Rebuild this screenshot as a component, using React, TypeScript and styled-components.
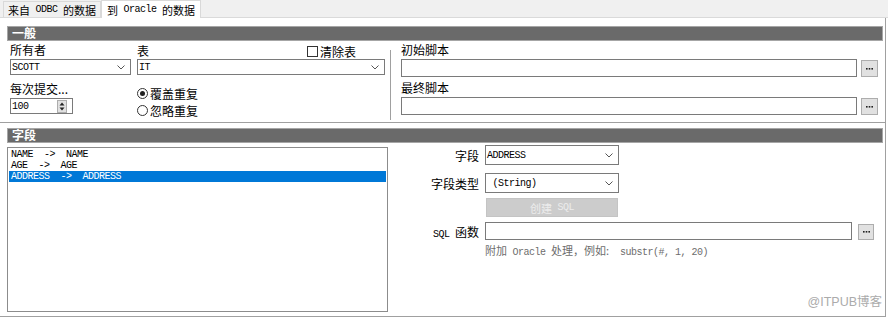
import React from "react";
import styled, {createGlobalStyle, css} from "styled-components";

const GlobalStyle = createGlobalStyle`
  html, body { margin: 0; padding: 0; background: #fff; }
  body {
    font-family: "Noto Sans CJK SC", "Noto Sans", sans-serif;
    font-size: 12px;
    color: #000;
  }
  * { box-sizing: border-box; }
`;

const mono = css`
  font-family: "Liberation Mono", "Noto Sans CJK SC", monospace;
  font-size: 10px;
  letter-spacing: -0.5px;
  white-space: pre;
`;

const Lat = styled.span`
  ${mono};
`;

const Window = styled.div`
  position: relative;
  width: 888px;
  height: 317px;
  overflow: hidden;
  background: #fff;
  display: flex;
  flex-direction: column;
`;

const TabStrip = styled.div`
  height: 18px;
  background: #f0f0f0;
  border-bottom: 1px solid #dadada;
  display: flex;
  align-items: flex-end;
  padding-left: 3px;
`;

const Tab = styled.div<{$active?: boolean}>`
  height: ${p => (p.$active ? 18 : 16)}px;
  margin-bottom: ${p => (p.$active ? -1 : 0)}px;
  padding: 0 ${p => (p.$active ? 5 : 4)}px;
  display: flex;
  align-items: center;
  font-size: 11px;
  white-space: pre;
  background: ${p => (p.$active ? "#fff" : "#f0f0f0")};
  border: 1px solid #d9d9d9;
  border-bottom: none;
`;

const Panel = styled.div`
  flex: 1;
  width: 886px;
  display: flex;
  flex-direction: column;
  padding-top: 8px;
  border-right: 1px solid #a0a0a0;
  border-bottom: 1px solid #a0a0a0;
`;

const SectionHeader = styled.div<{$mt?: number}>`
  margin: ${p => p.$mt ?? 0}px 0 0 7px;
  width: 876px;
  height: 15px;
  background: #6a6a6a;
  border: 1px solid #a6a6a6;
  color: #fff;
  font-size: 12px;
  font-weight: 700;
  line-height: 12px;
  padding-left: 4px;
`;

const GeneralBody = styled.div`
  height: 80px;
  display: flex;
  padding-left: 10px;
`;

const LeftGrid = styled.div`
  display: grid;
  grid-template-columns: 121px 248px;
  grid-template-rows: 18px 16px auto;
  column-gap: 6px;
`;

const Label = styled.div<{$h?: number}>`
  height: ${p => p.$h ?? 18}px;
  line-height: ${p => p.$h ?? 18}px;
  font-size: 12px;
  white-space: nowrap;
`;

const LabelRow = styled.div`
  display: flex;
  align-items: center;
  justify-content: space-between;
  height: 18px;
  padding-right: 29px;
`;

const CheckLabel = styled.label`
  display: flex;
  align-items: center;
  gap: 2px;
  font-size: 12px;
  margin-top: 2px;
`;

const CheckBox = styled.span`
  width: 11px;
  height: 11px;
  border: 1px solid #333;
  background: #fff;
`;

const Combo = styled.div<{$w?: number; $h?: number}>`
  width: ${p => (p.$w ? `${p.$w}px` : "auto")};
  height: ${p => p.$h ?? 16}px;
  border: 1px solid #7a7a7a;
  background: #fff;
  display: flex;
  align-items: center;
  justify-content: space-between;
  padding: 0 5px 0 1px;
  ${mono};
`;

const Chevron = () => (
  <svg width="8" height="5" viewBox="0 0 8 5">
    <polyline points="0.5,0.5 4,4 7.5,0.5" fill="none" stroke="#555" strokeWidth="1" />
  </svg>
);

const Stack = styled.div<{$mt?: number}>`
  display: flex;
  flex-direction: column;
  margin-top: ${p => p.$mt ?? 0}px;
`;

const Spin = styled.div`
  width: 63px;
  height: 16px;
  margin-top: 1px;
  border: 1px solid #7a7a7a;
  background: #fff;
  display: flex;
  align-items: center;
  justify-content: space-between;
  padding: 0 5px 0 1px;
  ${mono};
`;

const SpinButton = styled.span`
  width: 10px;
  height: 13px;
  background: #e1e1e1;
  border: 1px solid #adadad;
  display: flex;
  align-items: center;
  justify-content: center;
`;

const RadioRow = styled.label`
  height: 17px;
  display: flex;
  align-items: center;
  gap: 2px;
  font-size: 12px;
`;

const RadioCircle = styled.span<{$checked?: boolean}>`
  width: 11px;
  height: 11px;
  border-radius: 50%;
  border: 1px solid #333;
  background: #fff;
  display: flex;
  align-items: center;
  justify-content: center;
  &::after {
    content: "";
    width: 5px;
    height: 5px;
    border-radius: 50%;
    background: ${p => (p.$checked ? "#222" : "transparent")};
  }
`;

const Divider = styled.div`
  width: 1px;
  height: 70px;
  margin: 9px 0 0 5px;
  background: #a0a0a0;
`;

const RightPart = styled.div`
  width: 477px;
  margin-left: 10px;
  display: flex;
  flex-direction: column;
`;

const InputRow = styled.div<{$gap?: number}>`
  display: flex;
  align-items: flex-end;
  gap: ${p => p.$gap ?? 4}px;
`;

const TextBox = styled.div<{$w?: number; $h?: number}>`
  flex: ${p => (p.$w ? "none" : 1)};
  width: ${p => (p.$w ? `${p.$w}px` : "auto")};
  height: ${p => p.$h ?? 18}px;
  border: 1px solid #7a7a7a;
  background: #fff;
`;

const DotsButton = styled.button<{$size?: number}>`
  width: ${p => p.$size ?? 17}px;
  height: ${p => p.$size ?? 17}px;
  padding: 0;
  margin: 0;
  background: #e1e1e1;
  border: 1px solid #adadad;
  display: flex;
  align-items: center;
  justify-content: center;
`;

const Dots = () => (
  <svg width="7" height="2" viewBox="0 0 7 2">
    <rect x="0" y="0" width="1.6" height="1.6" fill="#222" />
    <rect x="2.7" y="0" width="1.6" height="1.6" fill="#222" />
    <rect x="5.4" y="0" width="1.6" height="1.6" fill="#222" />
  </svg>
);

const Separator = styled.div`
  height: 2px;
  margin-top: 1px;
  border-top: 1px solid #a0a0a0;
  border-bottom: 1px solid #fff;
`;

const FieldBody = styled.div`
  flex: 1;
  display: flex;
  padding-left: 7px;
`;

const ListBox = styled.div`
  width: 381px;
  margin: 4px 0 4px;
  border: 1px solid #8c8c8c;
  background: #fff;
  padding: 1px;
`;

const ListItem = styled.div<{$selected?: boolean}>`
  height: 11px;
  line-height: 11px;
  padding-left: 2px;
  ${mono};
  color: ${p => (p.$selected ? "#fff" : "#000")};
  background: ${p => (p.$selected ? "#0078d7" : "transparent")};
`;

const FieldForm = styled.div`
  display: flex;
  flex-direction: column;
`;

const FormRow = styled.div<{$mt: number}>`
  display: grid;
  grid-template-columns: 91px auto;
  column-gap: 6px;
  align-items: center;
  margin-top: ${p => p.$mt}px;
`;

const FormLabel = styled.div`
  text-align: right;
  font-size: 12px;
  white-space: pre;
`;

const DisabledButton = styled.div`
  width: 132px;
  height: 19px;
  margin-left: 1px;
  background: #cccccc;
  border: 1px solid #c4c4c4;
  color: #ececec;
  font-size: 11px;
  display: flex;
  align-items: center;
  justify-content: center;
  white-space: pre;
`;

const Hint = styled.div`
  height: 14px;
  line-height: 14px;
  font-size: 11px;
  color: #6d6d6d;
  white-space: pre;
`;

const Watermark = styled.div`
  position: absolute;
  right: 6px;
  bottom: 7px;
  font-family: "Liberation Sans", "Noto Sans CJK SC", sans-serif;
  font-size: 12.5px;
  color: #ababab;
`;

const SpinArrows = () => (
  <svg width="6" height="9" viewBox="0 0 6 9">
    <polygon points="3,0.5 5.5,3.5 0.5,3.5" fill="#222" />
    <polygon points="0.5,5.5 5.5,5.5 3,8.5" fill="#222" />
  </svg>
);

const fields = [
  {name: "NAME  ->  NAME"},
  {name: "AGE  ->  AGE"},
  {name: "ADDRESS  ->  ADDRESS", selected: true},
];

export default function App(): JSX.Element {
  return (
    <Window>
      <GlobalStyle />
      <TabStrip>
        <Tab>来自<Lat> ODBC </Lat>的数据</Tab>
        <Tab $active>到<Lat> Oracle </Lat>的数据</Tab>
      </TabStrip>
      <Panel>
        <SectionHeader>一般</SectionHeader>
        <GeneralBody>
          <LeftGrid>
            <Label>所有者</Label>
            <LabelRow>
              <span>表</span>
              <CheckLabel><CheckBox />清除表</CheckLabel>
            </LabelRow>
            <Combo>SCOTT<Chevron /></Combo>
            <Combo>IT<Chevron /></Combo>
            <Stack $mt={6}>
              <Label $h={16}>每次提交...</Label>
              <Spin>100<SpinButton><SpinArrows /></SpinButton></Spin>
            </Stack>
            <Stack $mt={10}>
              <RadioRow><RadioCircle $checked />覆盖重复</RadioRow>
              <RadioRow><RadioCircle />忽略重复</RadioRow>
            </Stack>
          </LeftGrid>
          <Divider />
          <RightPart>
            <Label>初始脚本</Label>
            <InputRow>
              <TextBox />
              <DotsButton><Dots /></DotsButton>
            </InputRow>
            <Label style={{marginTop: 2}}>最终脚本</Label>
            <InputRow>
              <TextBox />
              <DotsButton><Dots /></DotsButton>
            </InputRow>
          </RightPart>
        </GeneralBody>
        <Separator />
        <SectionHeader $mt={4}>字段</SectionHeader>
        <FieldBody>
          <ListBox>
            {fields.map(f => (
              <ListItem key={f.name} $selected={f.selected}>{f.name}</ListItem>
            ))}
          </ListBox>
          <FieldForm>
            <FormRow $mt={2}>
              <FormLabel>字段</FormLabel>
              <Combo $w={134} $h={20}>ADDRESS<Chevron /></Combo>
            </FormRow>
            <FormRow $mt={8}>
              <FormLabel>字段类型</FormLabel>
              <Combo $w={134} $h={20}> (String)<Chevron /></Combo>
            </FormRow>
            <FormRow $mt={5}>
              <span />
              <DisabledButton>创建<Lat> SQL</Lat></DisabledButton>
            </FormRow>
            <FormRow $mt={5}>
              <FormLabel><Lat>SQL </Lat>函数</FormLabel>
              <InputRow $gap={6}>
                <TextBox $w={367} />
                <DotsButton $size={16}><Dots /></DotsButton>
              </InputRow>
            </FormRow>
            <FormRow $mt={3}>
              <span />
              <Hint>附加<Lat> Oracle </Lat>处理，例如:<Lat>  substr(#, 1, 20)</Lat></Hint>
            </FormRow>
          </FieldForm>
        </FieldBody>
      </Panel>
      <Watermark>@ITPUB博客</Watermark>
    </Window>
  );
}
